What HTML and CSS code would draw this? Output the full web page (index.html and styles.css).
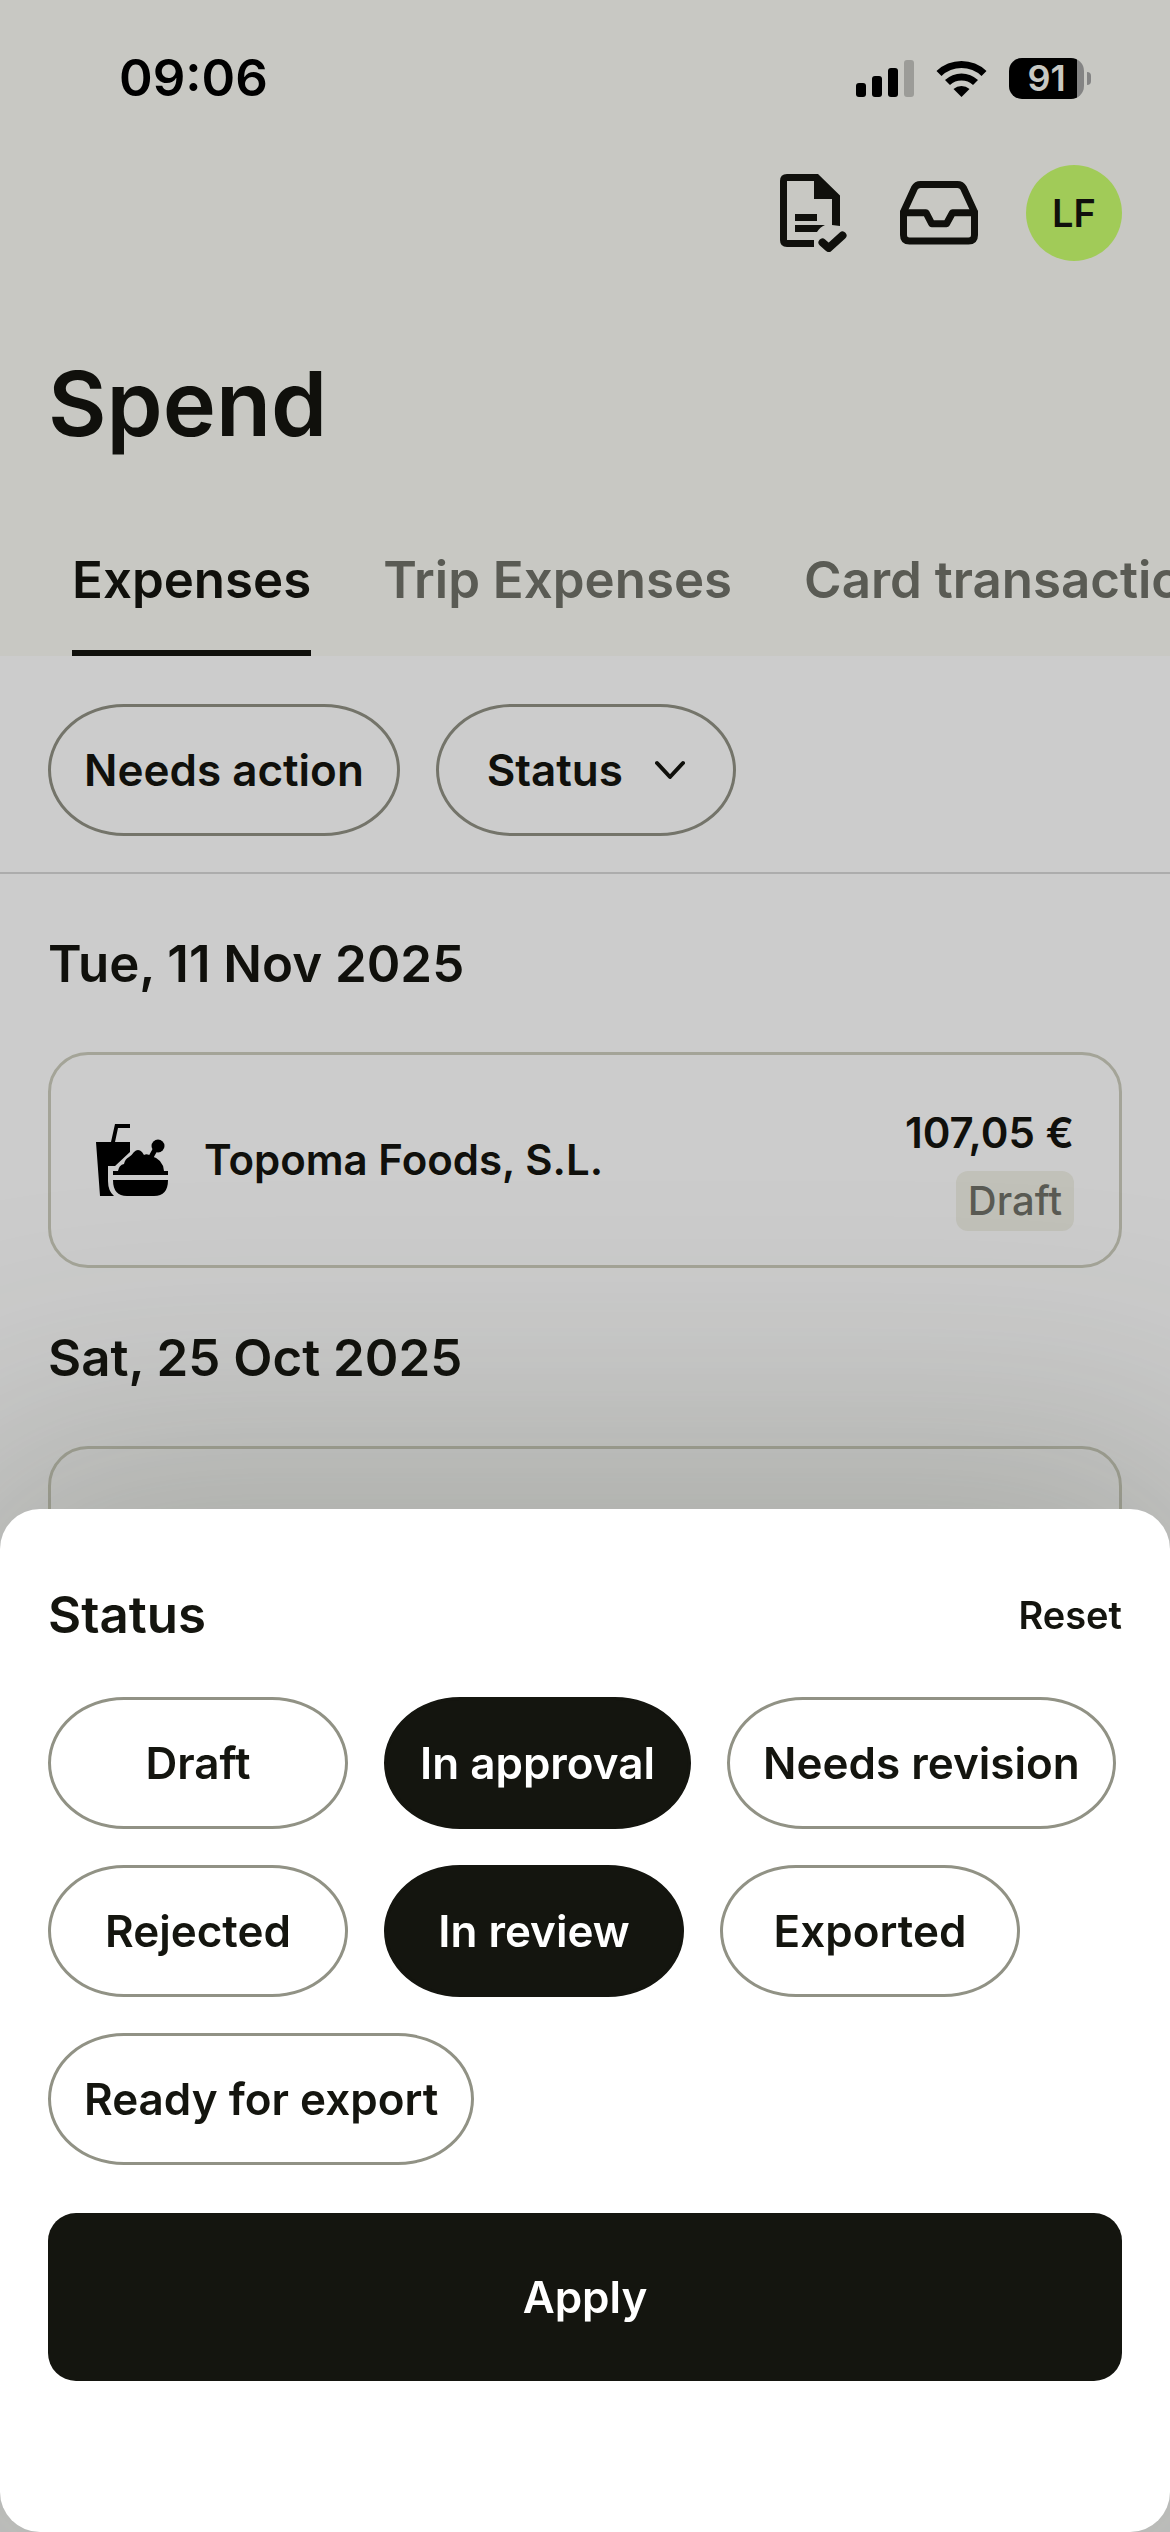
FILE: index.html
```html
<!DOCTYPE html>
<html lang="en">
<head>
    <meta charset="UTF-8">
    <meta name="viewport" content="width=device-width, initial-scale=1.0">
    <title>Spend</title>
    <link rel="stylesheet" href="styles.css">
</head>
<body>
    <div class="app">
        <header class="header">
            <div class="status-bar">
                <span class="clock">09:06</span>
                <div class="status-icons">
                    <svg width="58" height="37" viewBox="0 0 58 37" aria-hidden="true">
                        <rect x="0" y="23" width="10" height="14" rx="3"/>
                        <rect x="16" y="16" width="10" height="21" rx="3"/>
                        <rect x="32" y="8" width="10" height="29" rx="3"/>
                        <rect x="48" y="0" width="10" height="37" rx="3" opacity="0.22"/>
                    </svg>
                    <svg width="51" height="37" viewBox="0 0 51 37" aria-hidden="true">
                        <path d="M0.5 11 A36 36 0 0 1 50.5 11 L45.5 16 A29 29 0 0 0 5.5 16 Z"/>
                        <path d="M9 20 A24 24 0 0 1 42 20 L37 25 A17 17 0 0 0 14 25 Z"/>
                        <path d="M17.5 29 A12 12 0 0 1 33.5 29 L25.5 37 Z"/>
                    </svg>
                    <div class="battery"><span class="battery-level">91</span></div>
                </div>
            </div>
            <div class="toolbar">
                <button class="icon-button" aria-label="Approvals">
                    <svg width="78" height="78" viewBox="0 0 78 78" aria-hidden="true">
                        <path d="M40 73 H13 Q6 73 6 66 V7 Q6 0 13 0 H44 L66 21.5 V52 L58 51 V25 H40 V7 H13 V66 H40 Z"/>
                        <path d="M21 40 H43 V47 H21 Z M21 51 H51 Q46 53 43 58 H21 Z"/>
                        <path class="line" d="M48.5 68.5 L54.7 74 L68.5 61.5" stroke-width="8"/>
                    </svg>
                </button>
                <button class="icon-button" aria-label="Inbox">
                    <svg width="78" height="78" viewBox="0 0 78 78" aria-hidden="true">
                        <path class="line" d="M3.5 38 L14.5 14 Q16.5 10.5 20.5 10.5 H57.5 Q61.5 10.5 63.5 14 L74.5 38 V61 Q74.5 67 68.5 67 H9.5 Q3.5 67 3.5 61 Z" stroke-width="7"/>
                        <path class="line" d="M3.5 38.7 H26 L31.7 49.7 H46.5 L52.5 38.7 H74.5" stroke-width="7"/>
                    </svg>
                </button>
                <button class="avatar">LF</button>
            </div>
            <h1>Spend</h1>
            <nav class="tabs">
                <a href="#expenses" class="tab active">Expenses</a>
                <a href="#trips" class="tab">Trip Expenses</a>
                <a href="#cards" class="tab">Card transactions</a>
            </nav>
        </header>

        <div class="filters">
            <button class="chip">Needs action</button>
            <button class="chip">
                Status
                <svg width="30" height="20" viewBox="0 0 30 20" aria-hidden="true">
                    <path class="line" d="M2 3 L15 17 L28 3" stroke-width="4"/>
                </svg>
            </button>
        </div>

        <main class="expenses">
            <h2>Tue, 11 Nov 2025</h2>
            <article class="card">
                <!-- drink with a straw and a bowl of food -->
                <svg width="72" height="74" viewBox="0 0 72 74" aria-hidden="true">
                    <path d="M0 19 H15 L19 1 H34 V5 H22 L19 19 H34 V29 L19 43 H12 V58 Q12 68 18 73 H4 Z"/>
                    <path d="M17 48 H22 Q23 42 28 41 Q29 36 33 34 Q36 32 38 29 Q42 25 46 29 L48 32 Q51 30 55 33 Q67 36 68 48 H72 V52 H17 Z"/>
                    <path class="line" d="M55 34 L60 25" stroke-width="5"/>
                    <circle cx="62" cy="23" r="6.5"/>
                    <path d="M17 57 H72 Q72 73 58 73 H31 Q17 73 17 57 Z"/>
                </svg>
                <span class="merchant">Topoma Foods, S.L.</span>
                <div class="amount">
                    <span>107,05 €</span>
                    <span class="badge">Draft</span>
                </div>
            </article>
            <h2>Sat, 25 Oct 2025</h2>
            <article class="card"></article>
        </main>
    </div>

    <div class="backdrop"></div>

    <section class="sheet" role="dialog" aria-labelledby="sheet-title">
        <div class="sheet-header">
            <h2 id="sheet-title">Status</h2>
            <button class="reset">Reset</button>
        </div>
        <div class="options">
            <button class="chip" aria-pressed="false">Draft</button>
            <button class="chip selected" aria-pressed="true">In approval</button>
            <button class="chip" aria-pressed="false">Needs revision</button>
            <button class="chip" aria-pressed="false">Rejected</button>
            <button class="chip selected" aria-pressed="true">In review</button>
            <button class="chip" aria-pressed="false">Exported</button>
            <button class="chip" aria-pressed="false">Ready for export</button>
        </div>
        <button class="apply">Apply</button>
    </section>
</body>
</html>
```
FILE: styles.css
```css
* {
    box-sizing: border-box;
}

body {
    margin: 0;
    height: 100vh;
    overflow: hidden;
    font-family: Inter, 'Liberation Sans', sans-serif;
    font-size: 44px;
    font-weight: 600;
    line-height: 60px;
    color: #14150f;
    background-color: white;
}

button {
    font: inherit;
    color: inherit;
    background: none;
    border: none;
    padding: 0;
    cursor: pointer;
}

h1,
h2 {
    margin: 0;
    font-weight: 600;
}

h2 {
    font-size: 51px;
    line-height: 72px;
}

svg {
    display: block;
    fill: currentColor;
}

.line {
    fill: none;
    stroke: currentColor;
    stroke-linecap: round;
    stroke-linejoin: round;
}

.header {
    background-color: #fafbf4;
}

.status-bar {
    display: flex;
    justify-content: space-between;
    align-items: center;
    height: 156px;
    padding: 0 79px 0 119px;
    color: black;
}

.clock {
    font-size: 51px;
}

.status-icons {
    display: flex;
    align-items: center;
    gap: 22px;
}

.battery {
    position: relative;
    width: 75px;
    height: 41px;
    margin-right: 7px;
    border-radius: 13px;
    background: linear-gradient(to right, black 68px, #a6a6a6 68px);
    color: #fafbf4;
    text-align: center;
}

/* the small contact on the right end */
.battery::after {
    content: "";
    position: absolute;
    left: 78px;
    top: 14px;
    width: 4px;
    height: 13px;
    border-radius: 0 6px 6px 0;
    background-color: #a6a6a6;
}

.battery-level {
    display: block;
    font-size: 36px;
    line-height: 41px;
}

.toolbar {
    display: flex;
    justify-content: flex-end;
    align-items: center;
    gap: 48px;
    padding: 9px 48px;
}

.avatar {
    width: 96px;
    height: 96px;
    border-radius: 50%;
    background-color: #cafe6f;
    font-size: 38px;
}

h1 {
    padding: 74px 48px 70px;
    font-size: 90px;
    line-height: 120px;
}

.tabs {
    display: flex;
    gap: 72px;
    padding: 0 72px;
    overflow: hidden;
}

.tab {
    padding: 10px 0 34px;
    border-bottom: 6px solid transparent;
    font-size: 51px;
    line-height: 72px;
    color: #71726a;
    text-decoration: none;
    white-space: nowrap;
}

.tab.active {
    color: #14150f;
    border-color: #14150f;
}

.filters {
    display: flex;
    gap: 36px;
    padding: 48px 48px 36px;
    border-bottom: 2px solid #d8d8d8;
}

.chip {
    display: flex;
    justify-content: center;
    align-items: center;
    gap: 32px;
    min-width: 300px;
    height: 132px;
    padding: 0 33px;
    border: 3px solid #919285;
    border-radius: 76px / 66px;
    white-space: nowrap;
}

.chip.selected {
    background-color: #14150f;
    border-color: #14150f;
    color: white;
}

.expenses {
    padding: 54px 48px;
}

.card {
    display: flex;
    align-items: center;
    gap: 36px;
    height: 216px;
    margin: 52px 0 54px;
    padding: 0 45px;
    border: 3px solid #cdcebe;
    border-radius: 40px;
    font-size: 42px;
}

.card svg {
    color: black;
}

.merchant {
    flex: 1;
}

.amount {
    display: flex;
    flex-direction: column;
    align-items: flex-end;
    gap: 8px;
    padding-top: 14px;
}

.badge {
    padding: 0 12px;
    border-radius: 12px;
    background-color: #f2f2e8;
    color: #71726a;
    font-size: 40px;
    font-weight: 500;
}

.backdrop {
    position: fixed;
    inset: 0;
    background-color: rgba(0, 0, 0, 0.2);
}

.sheet {
    position: fixed;
    left: 0;
    right: 0;
    bottom: 0;
    padding: 70px 48px 151px;
    border-radius: 40px;
    background-color: white;
    box-shadow: 0 0 360px 60px rgba(60, 66, 48, 0.25);
}

.sheet-header {
    display: flex;
    justify-content: space-between;
    align-items: center;
    margin-bottom: 46px;
}

.reset {
    font-size: 38px;
}

.options {
    display: flex;
    flex-wrap: wrap;
    gap: 36px;
    margin-bottom: 48px;
}

.apply {
    width: 100%;
    height: 168px;
    border-radius: 28px;
    background-color: #14150f;
    color: white;
}
```
